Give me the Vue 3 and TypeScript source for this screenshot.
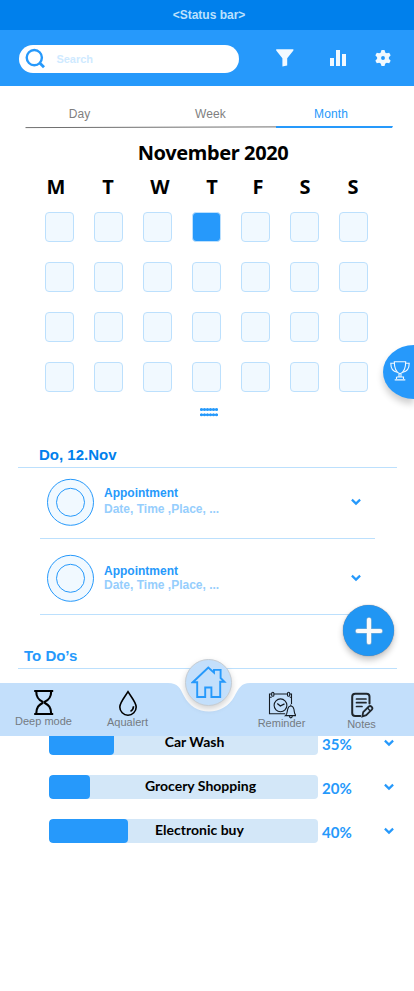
<script setup lang="ts">
interface Task {
  name: string
  percent: number
  fill: number
  shift: number
}

const tabs: string[] = ['Day', 'Week', 'Month']
const weekdays: string[] = ['M', 'T', 'W', 'T', 'F', 'S', 'S']
const dayCount = 28
const selectedDay = 4
const appointments: string[] = ['Date, Time ,Place, ...', 'Date, Time ,Place, ...']
const tasks: Task[] = [
  { name: 'Car Wash', percent: 35, fill: 65, shift: 22 },
  { name: 'Grocery Shopping', percent: 20, fill: 41, shift: 34 },
  { name: 'Electronic buy', percent: 40, fill: 79, shift: 32 },
]
const teeth: number[] = [0, 60, 120, 180, 240, 300]
const dots: number[] = [0, 1, 2, 3, 4, 5]
</script>

<template>
  <div class="screen">
    <div class="status">&lt;Status bar&gt;</div>
    <header class="header">
      <div class="search">
        <svg width="22" height="22" viewBox="0 0 22 22" fill="none" stroke="#2699fb" stroke-width="2.4">
          <circle cx="10.3" cy="9.6" r="7.6" />
          <path d="M15.5 14.8 L20 19.3" stroke-width="2.8" />
        </svg>
        <span>Search</span>
      </div>
      <svg class="filter" width="18" height="18" viewBox="0 0 18 18"><path d="M.2 .2H17.4V1.4L11.2 9.2V16.4L6.4 17.4V9.2L.2 1.4Z" fill="#f1f9ff" /></svg>
      <svg class="stats" width="18" height="18" viewBox="0 0 18 18"><path d="M1 9H5V17H1ZM7 1H11V17H7ZM13 5H17V17H13Z" fill="#f1f9ff" /></svg>
      <svg class="gear" width="18" height="18" viewBox="-9 -9 18 18">
        <circle r="3.9" fill="none" stroke="#f1f9ff" stroke-width="3.9" />
        <path v-for="t in teeth" :key="t" d="M-2.6 -4.5L-1.5 -8H1.5L2.6 -4.5Z" fill="#f1f9ff" :transform="`rotate(${t})`" />
      </svg>
    </header>

    <nav class="tabs">
      <span v-for="tab in tabs" :key="tab" :class="['tab', { active: tab === 'Month' }]">{{ tab }}</span>
    </nav>
    <svg class="tab-line" width="414" height="4" viewBox="0 0 414 4">
      <path d="M25.5 2.6L276 1.9" stroke="#707070" stroke-width="1" />
      <path d="M276 1H393L392 3H276Z" fill="#2699fb" />
    </svg>

    <section class="calendar">
      <h1>November 2020</h1>
      <div class="weekdays"><span v-for="(d, i) in weekdays" :key="i">{{ d }}</span></div>
      <div class="days"><i v-for="n in dayCount" :key="n" :class="['day', { chosen: n === selectedDay }]"></i></div>
      <svg class="handle" width="18" height="9" viewBox="0 0 18 9" fill="#2699fb">
        <path d="M0 1.5H18M0 6.7H18" stroke="#2699fb" stroke-width="1.5" />
        <template v-for="n in dots" :key="n">
          <circle :cx="1.5 + n * 3" cy="1.5" r="1.5" />
          <circle :cx="1.5 + n * 3" cy="6.7" r="1.5" />
        </template>
      </svg>
    </section>

    <section class="agenda">
      <h2>Do, 12.Nov</h2>
      <article v-for="(detail, i) in appointments" :key="i" class="appointment">
        <svg width="48" height="48" viewBox="0 0 48 48" fill="#f1f9ff" stroke="#2699fb" stroke-width="1">
          <circle cx="23.5" cy="24.3" r="23" /><circle cx="23.5" cy="24.3" r="14" />
        </svg>
        <div class="info"><strong>Appointment</strong><span>{{ detail }}</span></div>
        <svg class="chevron" width="10" height="8" viewBox="0 0 10 8"><path d="M.9 1.6L5 5.6L9.1 1.6" /></svg>
      </article>
    </section>

    <section class="todos">
      <h2>To Do’s</h2>
      <div class="tasks">
        <div v-for="task in tasks" :key="task.name" class="task">
          <div class="bar">
            <div class="fill" :style="{ width: task.fill + 'px' }"></div>
            <span :style="{ paddingLeft: task.shift + 'px' }">{{ task.name }}</span>
          </div>
          <b>{{ task.percent }}%</b>
          <svg class="chevron" width="10" height="8" viewBox="0 0 10 8"><path d="M.9 1.6L5 5.6L9.1 1.6" /></svg>
        </div>
      </div>
    </section>

    <button class="trophy" aria-label="Achievements">
      <svg width="20" height="20" viewBox="0 0 20 20" fill="none" stroke="#f1f9ff" stroke-width="1.1">
        <path d="M4.3 .8H15.7C15.7 7.3 13.7 11.6 10 12.8C6.3 11.6 4.3 7.3 4.3 .8Z" />
        <path d="M4.4 2.3H.8C.8 7 3 10.7 7.2 11.2M15.6 2.3H19.2C19.2 7 17 10.7 12.8 11.2" />
        <path d="M9 12.7V16H11V12.7M6.5 16H13.5V18M6.5 16V18M4.7 18.9H15.3" />
      </svg>
    </button>

    <button class="add" aria-label="Add">
      <svg width="32" height="32" viewBox="0 0 32 32" stroke-linecap="round">
        <path d="M16 4.8V27.2M4.8 16H27.2" stroke="#8eb4d3" stroke-width="5.2" />
        <path d="M16 4.8V27.2M4.8 16H27.2" stroke="#fafafa" stroke-width="4.1" />
      </svg>
    </button>

    <footer class="dock">
      <svg class="dock-shape" width="414" height="53" viewBox="0 0 414 53"><path d="M0 0H168C178 0 180 5 184 13C189 23 198 28.4 209 28.4C220 28.4 229 23 234 14C239 5 241 0 250 0H414V53H0Z" fill="#c3dffb" /></svg>
      <div class="dock-items">
        <div class="dock-item">
          <svg width="28" height="26" viewBox="0 0 28 26" fill="none" stroke="#000" stroke-width="2.1">
            <path d="M4.2 2H23.2M4.2 25H23.2" />
            <path d="M6.2 2C6.2 9 9 11 12.5 12.6V14C9 16 6.2 18 6.2 25M21.2 2C21.2 9 18.4 11 14.9 12.6V14C18.4 16 21.2 18 21.2 25" />
          </svg>
          <span>Deep mode</span>
        </div>
        <div class="dock-item">
          <svg width="28" height="26" viewBox="0 0 28 26" fill="none" stroke="#000" stroke-width="1.6">
            <path d="M14 1.7C10.5 7.5 5.8 12.5 5.8 17A8.2 8.2 0 0 0 22.2 17C22.2 12.5 17.5 7.5 14 1.7Z" />
            <path d="M19.5 16.2C19.4 18.8 18.5 20.3 16.5 21.4" />
          </svg>
          <span>Aqualert</span>
        </div>
        <div class="dock-item">
          <svg width="28" height="28" viewBox="0 0 28 28" fill="none" stroke="#151c23" stroke-width="1.1">
            <path d="M3.7 3H1.5V22.7H17.2M5.9 3H19.4M21.8 3H23.5V13M1.5 6.2H3.7M21.8 6.2H23.5" />
            <rect x="3.7" y="1.3" width="2.2" height="4" rx="1.1" /><rect x="19.5" y="1.3" width="2.2" height="4" rx="1.1" />
            <circle cx="12.5" cy="14.3" r="6.4" /><path d="M9.3 12.6L12.3 15L16.5 12.8" stroke-width="1.3" />
            <path d="M17.5 24.6C19.6 22.9 19 20.2 19.8 17.8C20.5 15.7 22 15 22.8 15S25.1 15.7 25.8 17.8C26.6 20.2 25.8 22.9 28 24.6ZM21.4 24.8C21.6 27.5 24 27.5 24.4 24.8M22.8 15V13.4" />
          </svg>
          <span>Reminder</span>
        </div>
        <div class="dock-item">
          <svg width="28" height="26" viewBox="0 0 28 26" fill="none" stroke="#20272d" stroke-width="2" stroke-linecap="round">
            <path d="M12.3 24H7.2Q4.2 24 4.2 21V4.8Q4.2 1.8 7.2 1.8H18.5Q21.5 1.8 21.5 4.8V11.5" />
            <path d="M8.5 7H18M8.5 10.7H18M8.5 14.5H14" stroke-width="1.7" />
            <path d="M15.2 20.2L20.8 14.5Q22.2 13.4 23.7 14.8Q25.1 16.3 23.8 17.7L18.2 23.1L14.4 24.4Z" stroke-width="1.8" />
            <path d="M20 16.5L21.8 18.5" stroke-width="1.3" />
          </svg>
          <span>Notes</span>
        </div>
      </div>
      <button class="home" aria-label="Home">
        <svg width="36" height="34" viewBox="191 666 36 34" fill="none" stroke="#2699fb" stroke-width="1.9">
          <path d="M197.2 682.2H192.8L208.3 667.6L214 672.7V669.9H220.6V678L224.4 681.8H220.2V697H211.4V687.5H205.2V697H197.2Z" />
        </svg>
      </button>
    </footer>
  </div>
</template>

<style>
body { background: #fff; }
</style>

<style scoped>
.screen { position: relative; width: 414px; height: 991px; overflow: hidden; background: #fff; font-family: "Liberation Sans", Arial, sans-serif; }
h1, h2 { margin: 0; }
button { padding: 0; border: 0; }
svg { display: block; flex: none; }
.status { height: 30px; line-height: 30px; padding-left: 4px; text-align: center; background: #0080ec; color: #bce0fd; font-size: 12px; font-weight: 700; }
.header { display: flex; align-items: flex-start; height: 41px; padding: 15px 0 0 19px; background: #2699fb; }
.search { display: flex; align-items: center; width: 215px; height: 28px; padding-left: 5px; gap: 10px; border-radius: 14px; background: #fff; color: #cfeaff; font-size: 11px; font-weight: 700; line-height: 28px; }
.search svg { margin-right: .4px; }
.filter { margin: 4px 0 0 36.5px; }
.stats { margin: 4px 0 0 35.5px; }
.gear { margin: 4px 0 0 26.5px; }
.tabs { display: grid; grid-template-columns: 131px 131px 110px; padding: 20px 0 3px 14px; height: 16px; line-height: 16px; font-size: 12px; color: #7f7f7f; letter-spacing: .1px; text-align: center; }
.active { color: #2699fb; }
.tab-line { height: 4px; }
.calendar { height: 303px; padding-top: 10px; color: #000; }
h1, .weekdays { font-family: "Noto Sans", "Open Sans", sans-serif; font-size: 20px; font-weight: 700; line-height: 28px; text-align: center; }
h1 { padding-left: 12px; letter-spacing: -.4px; }
.weekdays { display: grid; grid-template-columns: 52px 52px 52px 52px 40px 54px 42px; padding: 6px 0 11px 30px; }
.days { display: grid; grid-template-columns: repeat(7, 29px); grid-auto-rows: 30px; gap: 20px; padding-left: 45px; }
.day { box-sizing: border-box; border: 1px solid #bce0fd; border-radius: 4px; background: #f1f9ff; }
.chosen { background: #2699fb; }
.handle { margin: 16px 0 0 200px; }
h2 { font-size: 15px; line-height: 25px; }
.agenda { height: 201px; padding-left: 18px; }
.agenda h2 { width: 357.5px; height: 25px; padding-left: 21px; border-bottom: 1px solid #bce0fd; color: #0080ec; }
.appointment { display: flex; box-sizing: border-box; height: 76px; width: 335px; margin-left: 22px; padding-left: 7px; border-bottom: 1px solid #bce0fd; }
.appointment:nth-of-type(1) { height: 71px; }
.appointment > svg:first-child { margin-top: 15px; }
.appointment:nth-of-type(1) > svg:first-child { margin-top: 10px; }
.info { display: flex; flex-direction: column; width: 247px; padding: 17px 0 0 9px; font-size: 12px; line-height: 16px; color: #96cefd; font-weight: 700; }
.appointment:nth-of-type(2) .info { padding-top: 25px; line-height: 14px; }
.info strong { color: #2699fb; }
.chevron { fill: none; stroke: #2699fb; stroke-width: 2.2; }
.appointment .chevron { margin: 30px 0 0; }
.appointment:nth-of-type(2) .chevron { margin-top: 35px; }
.todos { padding: 0 0 0 18px; }
.todos h2 { width: 373px; height: 25px; padding-left: 6px; color: #2699fb; border-bottom: 1px solid #bce0fd; line-height: 26px; }
.tasks { display: grid; grid-auto-rows: 24px; gap: 20px; padding: 62px 0 0 31px; font-family: Lato, sans-serif; }
.task { display: flex; }
.bar { display: grid; width: 269px; height: 24px; overflow: hidden; border-radius: 4px; background: #d3e7f8; }
.fill, .bar span { grid-area: 1 / 1; }
.fill { height: 24px; border-radius: 4px; background: #2699fb; }
.bar span { box-sizing: border-box; width: 269px; text-align: center; color: #000; font-size: 14px; font-weight: 700; line-height: 22px; }
.task b { width: 62px; padding-left: 4px; color: #2699fb; font-size: 15px; line-height: 26px; }
.task .chevron { margin-top: 8px; }
.trophy { position: absolute; top: 345px; right: 0; width: 31px; height: 54px; padding: 0 4px 2px 7px; border-radius: 31px 0 0 31px / 27px 0 0 27px; background: #2699fb; box-shadow: 0 5px 7px rgba(0, 0, 0, .2); }
.add { position: absolute; left: 343px; top: 605px; display: grid; place-items: center; width: 51px; height: 51px; border-radius: 50%; background: #2196f3; box-shadow: 0 0 1px #667, 0 4px 6px rgba(0, 0, 0, .24); }
.dock { position: absolute; left: 0; top: 683px; width: 414px; height: 53px; }
.dock-shape, .dock-items { position: absolute; left: 0; top: 0; }
.dock-items { display: grid; grid-template-columns: 87px 81px 72px 83px 77px; height: 53px; }
.dock-item { display: flex; flex-direction: column; align-items: center; padding-top: 6px; color: #747b82; font-size: 11px; line-height: 12px; }
.dock-item:nth-child(2) { padding-top: 7px; }
.dock-item:nth-child(3) { grid-column: 4; padding-top: 8px; }
.dock-item:nth-child(3) svg { margin-bottom: -2px; }
.dock-item:nth-child(4) { grid-column: 5; padding-top: 9px; }
.home { position: absolute; left: 185px; top: -24px; display: grid; place-items: center; box-sizing: border-box; width: 47px; height: 47px; border: 1px solid #c5ccd3; border-radius: 50%; background: #c3dffb; box-shadow: 0 3px 6px rgba(0, 0, 0, .18); }
</style>
